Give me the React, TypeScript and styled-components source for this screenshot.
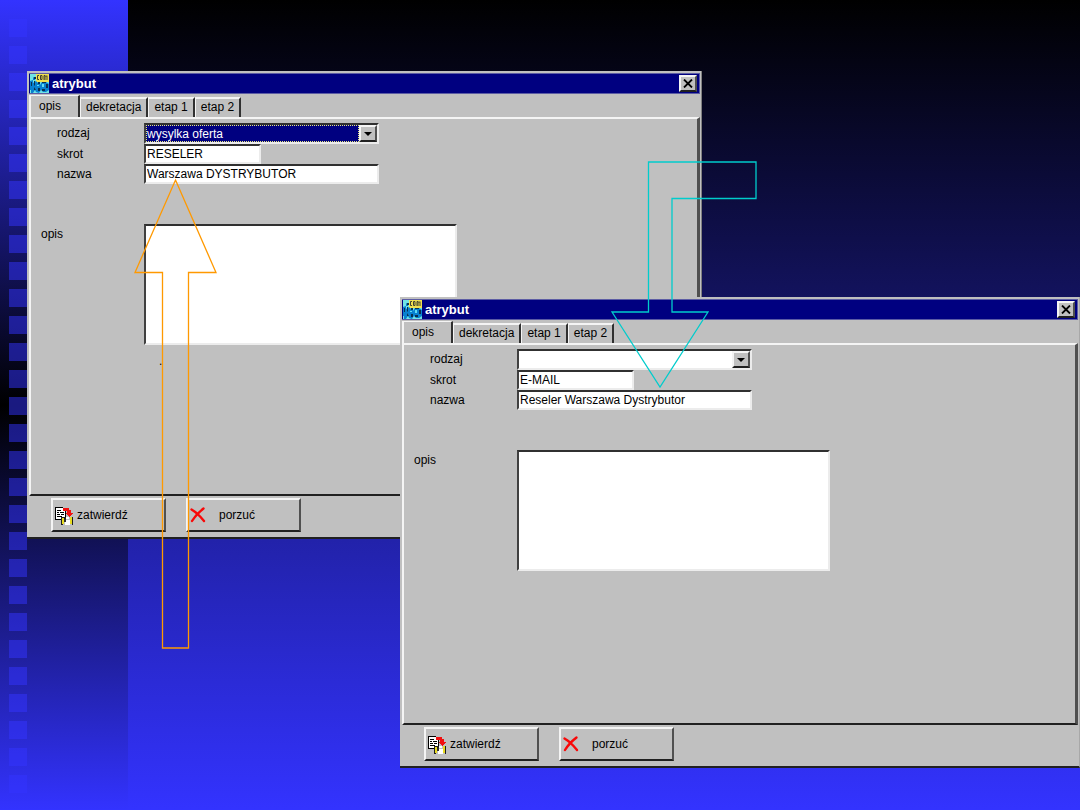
import React from "react";
import styled, { createGlobalStyle, css } from "styled-components";

const GlobalStyle = createGlobalStyle`
  *, *::before, *::after { box-sizing: border-box; }
  body { margin: 0; }
  button, input, select, textarea { font: inherit; color: inherit; margin: 0; border-radius: 0; }
`;

const face = "#c0c0c0";
const navy = "#000080";

const raised = css`
  border: 2px solid;
  border-color: #f4f4f4 #505050 #202020 #f4f4f4;
`;

const sunken = css`
  border: 2px solid;
  border-color: #303030 #ececec #ececec #404040;
`;

const Slide = styled.main`
  position: relative;
  display: flex;
  min-height: 100vh;
  overflow: hidden;
  background: linear-gradient(#000 0%, #3333ff 100%);
  font: 12px/16px "Liberation Sans", Arial, sans-serif;
  color: #000;
`;

const Stripe = styled.div`
  width: 128px;
  padding: 19px 9px 0;
  background: linear-gradient(#3333ff 0%, #000 50%, #3333ff 100%);
`;

const Squares = styled.div`
  display: flex;
  flex-direction: column;
  gap: 9px;
`;

const Square = styled.div`
  width: 18px;
  height: 18px;
  background: rgba(51, 51, 255, 0.5);
`;

const Dialog = styled.section<{ $place: "back" | "front" }>`
  position: absolute;
  display: flex;
  flex-direction: column;
  padding: 2px 1px 5px 2px;
  background: ${face};
  border-bottom: 2px solid #202020;
  ${({ $place }) =>
    $place === "back"
      ? css`
          top: 71px;
          left: 27px;
          width: 62.5%;
          border-right: 1px solid #808080;
        `
      : css`
          top: 297px;
          left: 400px;
          right: 0;
          border-right: 1px solid #a8a8a8;
        `}
`;

const TitleBar = styled.header`
  display: flex;
  align-items: center;
  gap: 3px;
  height: 21px;
  padding: 0 2px 0 1px;
  background: ${navy};
  border: 1px solid #5c5ca4;
  border-width: 1px 1px 1px 0;
  color: #fff;
`;

const Title = styled.h2`
  flex: 1;
  margin: 0;
  font-size: 13px;
  line-height: 16px;
  font-weight: bold;
`;

const CloseButton = styled.button`
  display: grid;
  place-items: center;
  width: 18px;
  height: 17px;
  padding: 0;
  background: ${face};
  color: #000;
  ${raised}
`;

const Tabs = styled.nav`
  display: flex;
  align-items: flex-end;
  height: 23px;
`;

const Tab = styled.button<{ $active?: boolean }>`
  height: 20px;
  padding: 0 5px 2px;
  line-height: 16px;
  background: ${face};
  border: solid;
  border-width: 2px 2px 0 1px;
  border-color: #f4f4f4 #303030 transparent #f4f4f4;
  ${({ $active }) =>
    $active &&
    css`
      width: 51px;
      height: 23px;
      margin-bottom: -1px;
      padding: 0 0 3px 8px;
      text-align: left;
      border-width: 1px 2px 0 2px;
    `}
`;

const Panel = styled.div<{ $height: number }>`
  min-height: ${({ $height }) => $height}px;
  padding: 4px 0 0 10px;
  border: solid;
  border-width: 2px 3px 2px 2px;
  border-color: #f4f4f4 #505050 #202020 #f4f4f4;
`;

const Row = styled.div<{ $tall?: boolean }>`
  display: grid;
  grid-template-columns: 103px 1fr;
  align-items: start;
  margin-top: ${({ $tall }) => ($tall ? 40 : 0)}px;
`;

const Label = styled.label<{ $indent?: boolean }>`
  padding-left: ${({ $indent }) => ($indent ? 16 : 0)}px;
  padding-top: 1px;
  line-height: 18px;
`;

const Combo = styled.div`
  display: grid;
  width: 235px;
  height: 21px;
  ${sunken}
  background: #fff;
  > * { grid-area: 1 / 1; }
`;

const Select = styled.select<{ $selected: boolean }>`
  appearance: none;
  width: 213px;
  height: 17px;
  padding: 0 1px;
  border: 0;
  background: #fff;
  line-height: 16px;
  ${({ $selected }) =>
    $selected &&
    css`
      background: ${navy};
      color: #fff;
      border: 1px dotted #e8e880;
      padding: 0;
    `}
`;

const DropMark = styled.span`
  justify-self: end;
  display: grid;
  place-items: center;
  width: 18px;
  height: 17px;
  background: ${face};
  pointer-events: none;
  ${raised}
`;

const Field = styled.input<{ $short?: boolean }>`
  width: ${({ $short }) => ($short ? 117 : 235)}px;
  height: 20px;
  padding: 0 1px;
  background: #fff;
  line-height: 16px;
  ${sunken}
`;

const Memo = styled.textarea`
  display: block;
  width: 313px;
  height: 121px;
  padding: 1px;
  resize: none;
  background: #fff;
  ${sunken}
`;

const Remark = styled.p`
  margin: 8px 0 0 118px;
`;

const Actions = styled.footer`
  display: flex;
  gap: 20px;
  padding: 2px 22px 0;
`;

const ActionButton = styled.button<{ $gap: number }>`
  display: flex;
  align-items: center;
  gap: ${({ $gap }) => $gap}px;
  width: 115px;
  height: 34px;
  padding: 0 1px;
  background: ${face};
  ${raised}
`;

const Arrows = styled.svg`
  position: absolute;
  top: 0;
  left: 0;
  pointer-events: none;
`;

const AppIcon = () => (
  <svg width="19" height="19" viewBox="0 0 19 19" aria-hidden="true">
    <rect width="19" height="19" fill="#70e4e4" />
    <rect x="6" y="0" width="13" height="8" fill="#f0e050" />
    <path d="M9 1.5H7.5v4H9M10.5 1.5h1.5v4h-1.5zM14 6V1.5h1V6M17 1.5V6M16 1.5V3" fill="none" stroke="#404030" />
    <path
      d="M3 3l2 1v2H3zM0 7l3-1v3l3-2 2 2 2-1v3l2-3h4l3 2v6l-3 2h-3l-2-2-2 3-3-1-1-2-2 3H1v-3H0z"
      fill="#0880d0"
    />
    <path
      d="M4 3h2v2H4zM1 8h1v4H1zM5 7v4l-1 1V7zM8 8h2v2H8zM4 13l2 3H4zM8 14h2v3H8zM12 8h4v1h-4zM16 10h2v4h-2zM12 15h3v2h-3z"
      fill="#0a3050"
    />
    <path d="M7 11h2v1H7zM12 10h2v3h-2z" fill="#60dcf4" />
  </svg>
);

const SaveIcon = () => (
  <svg width="19" height="19" viewBox="0 0 19 19" shapeRendering="crispEdges" aria-hidden="true">
    <path d="M1.5 1.5h7l3 3v9h-10z" fill="#fff" stroke="#000" />
    <path d="M3 4.5h4M3 6.5h2M6 6.5h4M3 8.5h3M7 8.5h3M3 10.5h5" stroke="#000" />
    <path d="M9 2h6v2h2v3h2l-4 4-4-4h2V5H9z" fill="#f01010" />
    <path d="M7 11h2v8H7zM18 11h1v8h-1zM9 11h3v2H9z" fill="#202020" />
    <path d="M8 12h2v6H8zM16 11h2v7h-2z" fill="#e8dc20" />
    <path d="M11 14h5v5h-5zM12 11h3v2h-3z" fill="#fff" />
    <path d="M10 13h2v3h-2z" fill="#303030" />
  </svg>
);

const CancelIcon = () => (
  <svg width="18" height="18" viewBox="0 0 18 18" aria-hidden="true">
    <path d="M2.5 3.5C7 6 11 10 15 15M14.5 2.5C10 6 6 10 3 15" fill="none" stroke="#f80808" strokeWidth="2.4" strokeLinecap="round" />
  </svg>
);

interface AttributeProps {
  id: string;
  place: "back" | "front";
  kind: string;
  code: string;
  name: string;
  panelHeight: number;
  remark?: string;
}

function AttributeDialog({ id, place, kind, code, name, panelHeight, remark }: AttributeProps) {
  return (
    <Dialog $place={place} aria-labelledby={`${id}-title`}>
      <TitleBar>
        <AppIcon />
        <Title id={`${id}-title`}>atrybut</Title>
        <CloseButton type="button" aria-label="Zamknij">
          <svg width="10" height="9" viewBox="0 0 10 9" aria-hidden="true">
            <path d="M1 .5l8 8M9 .5l-8 8" stroke="#000" strokeWidth="1.8" />
          </svg>
        </CloseButton>
      </TitleBar>
      <Tabs>
        <Tab type="button" $active>opis</Tab>
        <Tab type="button">dekretacja</Tab>
        <Tab type="button">etap 1</Tab>
        <Tab type="button">etap 2</Tab>
      </Tabs>
      <Panel $height={panelHeight}>
        <Row>
          <Label htmlFor={`${id}-kind`} $indent>rodzaj</Label>
          <Combo>
            <Select id={`${id}-kind`} defaultValue={kind} $selected={kind !== ""}>
              <option value={kind}>{kind}</option>
            </Select>
            <DropMark>
              <svg width="8" height="4" viewBox="0 0 8 4" aria-hidden="true">
                <path d="M0 0h8L4 4z" />
              </svg>
            </DropMark>
          </Combo>
        </Row>
        <Row>
          <Label htmlFor={`${id}-code`} $indent>skrot</Label>
          <Field id={`${id}-code`} defaultValue={code} $short />
        </Row>
        <Row>
          <Label htmlFor={`${id}-name`} $indent>nazwa</Label>
          <Field id={`${id}-name`} defaultValue={name} />
        </Row>
        <Row $tall>
          <Label htmlFor={`${id}-memo`}>opis</Label>
          <Memo id={`${id}-memo`} />
        </Row>
        {remark && <Remark>{remark}</Remark>}
      </Panel>
      <Actions>
        <ActionButton type="button" $gap={4}>
          <SaveIcon />
          zatwierdź
        </ActionButton>
        <ActionButton type="button" $gap={12}>
          <CancelIcon />
          porzuć
        </ActionButton>
      </Actions>
    </Dialog>
  );
}

export default function App() {
  return (
    <>
      <GlobalStyle />
      <Slide>
        <Stripe>
          <Squares>
            {Array.from({ length: 29 }, (_, i) => (
              <Square key={i} />
            ))}
          </Squares>
        </Stripe>
        <AttributeDialog
          id="first"
          place="back"
          kind="wysylka oferta"
          code="RESELER"
          name="Warszawa DYSTRYBUTOR"
          panelHeight={379}
          remark="."
        />
        <AttributeDialog
          id="second"
          place="front"
          kind=""
          code="E-MAIL"
          name="Reseler Warszawa Dystrybutor"
          panelHeight={382}
        />
        <Arrows width="760" height="660" viewBox="0 0 760 660" fill="none" strokeWidth="1.3" aria-hidden="true">
          <path d="M175.5 180L216 272.5H188.5V648H162.5V272.5H135z" stroke="#ff9900" />
          <path d="M648.5 162H756V198.5H672V312H708L660 387L612 312H648.5z" stroke="#00cccc" />
        </Arrows>
      </Slide>
    </>
  );
}
